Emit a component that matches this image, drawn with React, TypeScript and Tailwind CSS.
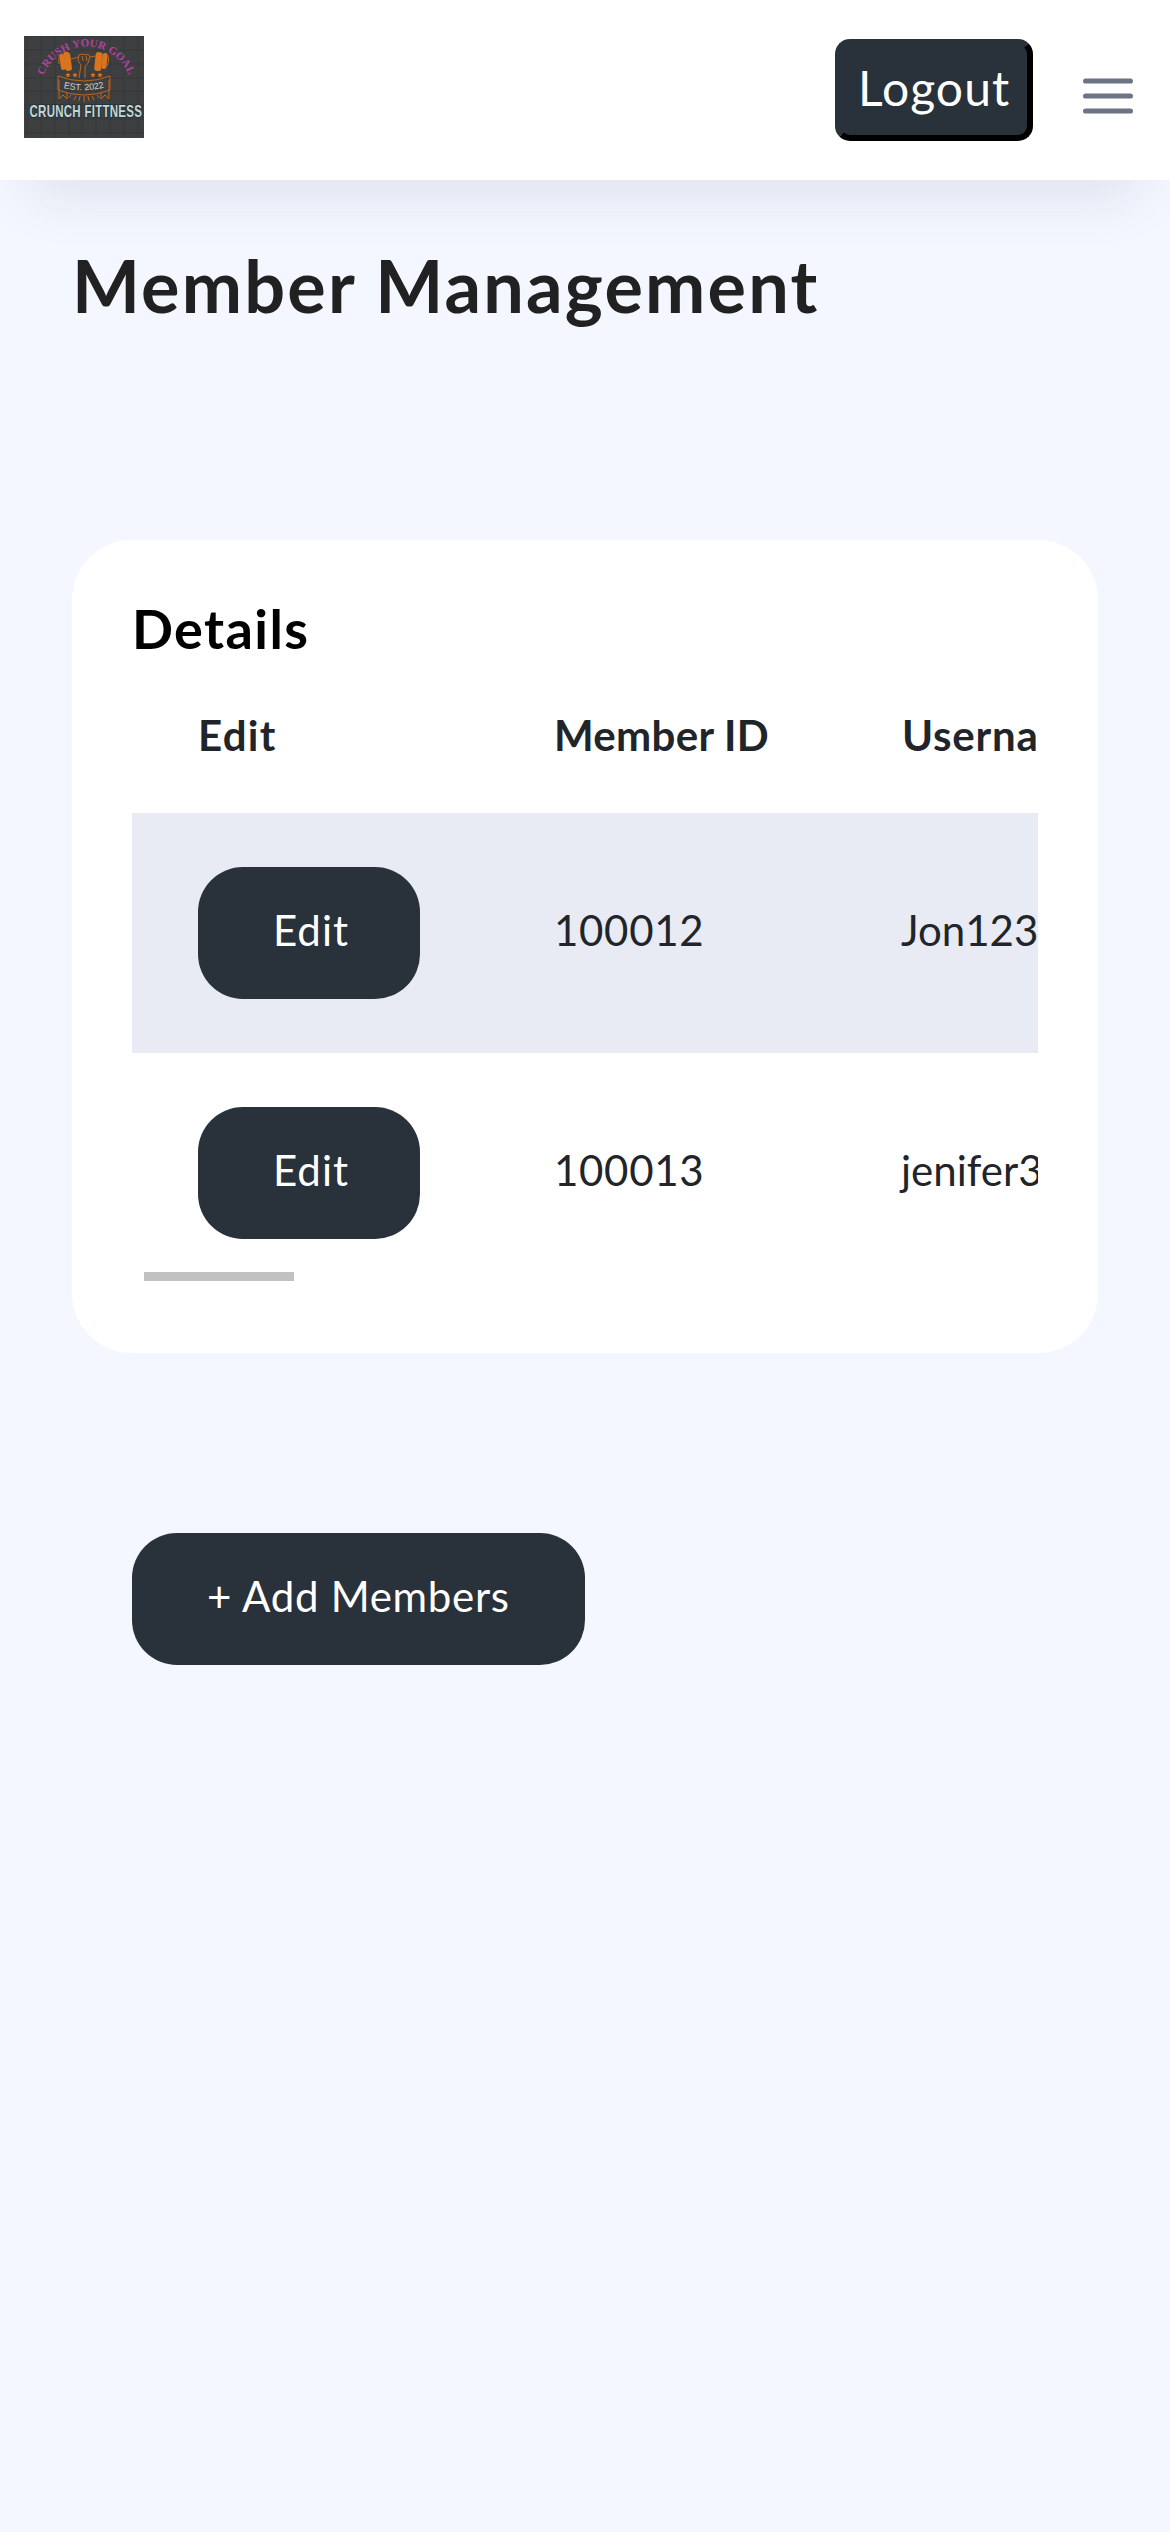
import React from "react";

const members = [
  { id: "100012", username: "Jon123" },
  { id: "100013", username: "jenifer35" },
];

function Logo() {
  return (
    <svg viewBox="0 0 120 102" className="block h-[102px] w-[120px]">
      <rect width="120" height="102" fill="#3e3f40" />
      <g stroke="#363738" strokeWidth="0.8">
        <path d="M3 0V102M17 0V102M31 0V102M45 0V102M58 0V102M72 0V102M86 0V102M100 0V102M114 0V102" />
        <path d="M0 0.5H120M0 14H120M0 28H120M0 42H120M0 55H120M0 69H120M0 83H120M0 97H120" />
      </g>
      <path id="logo-arc" d="M19.500 39.500A46 46 0 0 1 105 39.500" fill="none" />
      <text fill="#b0439f" fontFamily="'Liberation Serif', serif" fontWeight="700" fontSize="11">
        <textPath href="#logo-arc" textLength="109">CRUSH YOUR GOAL</textPath>
      </text>
      <g fill="#d9731c">
        <rect x="40" y="16" width="7" height="19" rx="3" transform="rotate(-8 43 25)" />
        <rect x="36" y="18" width="5" height="16" rx="2.500" transform="rotate(-8 38 25)" />
        <rect x="71" y="16" width="7" height="19" rx="3" transform="rotate(6 74 25)" />
        <rect x="78" y="17" width="5" height="16" rx="2.500" transform="rotate(6 80 25)" />
        <path d="M44 36.500l.8 1.600 1.800.2-1.300 1.200.3 1.800-1.600-.9-1.600.9.300-1.800-1.300-1.200 1.800-.2zM51 36.500l.8 1.600 1.800.2-1.300 1.200.3 1.800-1.600-.9-1.600.9.300-1.800-1.300-1.200 1.800-.2zM69 36.500l.8 1.600 1.800.2-1.300 1.200.3 1.800-1.600-.9-1.600.9.300-1.800-1.300-1.200 1.800-.2zM76 36.500l.8 1.600 1.800.2-1.300 1.200.3 1.800-1.600-.9-1.600.9.300-1.800-1.300-1.200 1.800-.2z" />
      </g>
      <g fill="none" stroke="#bd671f" strokeWidth="1">
        <path d="M47 23l8-2M66 21l6-1M55 19q3-2 6 0 4-2 5 2l-2 6-3 4v11M55 19l-1 6 3 4-2 13M58 20l1 5M62 20l1 5M35 28q-1-6 1-9M84 19q2 6-1 11" />
        <path d="M34 40Q60 50 86 40V54Q60 64 34 54ZM35 44V63L39 59 43 63V57M85 44V63L81 59 77 63V57M45 62l2-3M50 64l2-4M55 65l1-5M60 66V60M65 65l-1-5M70 64l-2-4M75 62l-2-3" />
      </g>
      <path id="logo-banner" d="M39.500 52Q60 57 82 51" fill="none" />
      <text fill="#cfd0d0" fontFamily="'Liberation Sans', sans-serif" fontSize="9">
        <textPath href="#logo-banner" textLength="41" lengthAdjust="spacing">EST. 2022</textPath>
      </text>
      <g transform="translate(5.500 81) scale(0.72 1)">
        <text
          textLength="156"
          lengthAdjust="spacing"
          fill="#c3d4d7"
          stroke="#223538"
          strokeWidth="2"
          paintOrder="stroke"
          fontFamily="'Liberation Sans', sans-serif"
          fontWeight="700"
          fontSize="16"
        >
          CRUNCH FITTNESS
        </text>
      </g>
    </svg>
  );
}

function Navbar() {
  return (
    <header className="flex h-[180px] items-start justify-between bg-white pl-6 pr-[36px] shadow-[0_46px_56px_-28px_rgba(30,30,80,0.09)]">
      <div className="pt-9">
        <Logo />
      </div>
      <div className="flex items-start pt-[39px]">
        <button className="flex h-[102px] w-[198px] items-start rounded-[15px] border-6 border-t-[#29313a] border-l-[#29313a] border-r-black border-b-black bg-[#29313a] pl-[17px] text-left text-[48px] leading-[86px] tracking-[1.1px] whitespace-nowrap text-white">
          Logout
        </button>
        <svg viewBox="0 0 52 40" className="mt-[37px] ml-[49px] h-10 w-[52px]" fill="none" stroke="#6b7385" strokeWidth="5.200" strokeLinecap="round">
          <path d="M3.600 5H48.400M3.600 20H48.400M3.600 35H48.400" />
        </svg>
      </div>
    </header>
  );
}

function EditButton() {
  return (
    <button className="block h-[132px] w-[222px] rounded-[45px] bg-[#29313a] pb-[7px] pl-[75px] text-left leading-[122px] tracking-[1px] text-white">
      Edit
    </button>
  );
}

export default function App() {
  return (
    <div className="h-[2532px] w-[1170px] overflow-hidden bg-[#f4f7ff] font-['Lato',sans-serif] text-[42px] text-[#212529]">
      <Navbar />
      <main className="px-[72px]">
        <h1 className="h-[360px] pt-[51px] text-[72px] leading-[108px] font-bold tracking-[2.200px] whitespace-nowrap text-[#212121]">
          Member Management
        </h1>
        <section className="h-[813px] rounded-[60px] bg-white px-[60px] pt-[54px]">
          <h2 className="h-[72px] text-[54px] leading-[70px] font-bold tracking-[1.400px] text-black">Details</h2>
          <div className="overflow-hidden">
            <div className="w-[1400px]">
              <div className="flex h-[147px] pt-[38px] pl-[66px] leading-[63px] font-bold">
                <div className="w-[356px] tracking-[1.300px]">Edit</div>
                <div className="w-[347px] tracking-[0.300px]">Member ID</div>
                <div className="pl-px tracking-[0.800px]">Username</div>
              </div>
              {members.map((m) => (
                <div key={m.id} className="flex h-[240px] items-center pl-[66px] odd:bg-white even:bg-[#e8ebf4]">
                  <div className="w-[356px]">
                    <EditButton />
                  </div>
                  <div className="w-[347px] pb-[6px] tracking-[0.700px]">{m.id}</div>
                  <div className="pb-[6px]">{m.username}</div>
                </div>
              ))}
            </div>
          </div>
          <div className="-mt-[21px] ml-3 h-[9px] w-[150px] bg-[#c1c1c1]" />
        </section>
        <button className="mt-[180px] ml-[60px] block h-[132px] w-[453px] rounded-[45px] bg-[#29313a] pb-[7px] pl-[75px] text-left leading-[122px] tracking-[0.700px] whitespace-nowrap text-white">
          + Add Members
        </button>
      </main>
    </div>
  );
}
